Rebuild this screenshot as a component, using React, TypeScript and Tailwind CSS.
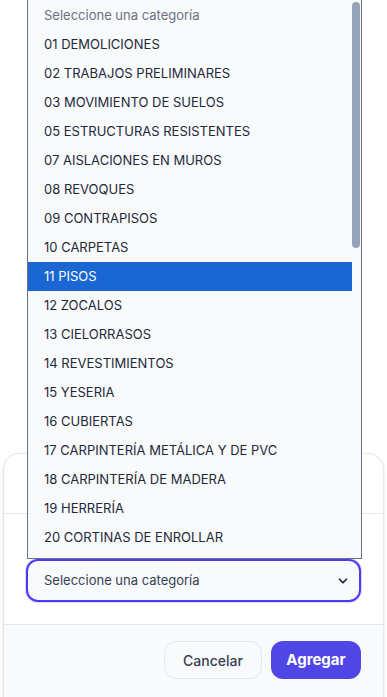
import { ChevronDown } from 'lucide-react';

const options = [
  '01 DEMOLICIONES',
  '02 TRABAJOS PRELIMINARES',
  '03 MOVIMIENTO DE SUELOS',
  '05 ESTRUCTURAS RESISTENTES',
  '07 AISLACIONES EN MUROS',
  '08 REVOQUES',
  '09 CONTRAPISOS',
  '10 CARPETAS',
  '11 PISOS',
  '12 ZOCALOS',
  '13 CIELORRASOS',
  '14 REVESTIMIENTOS',
  '15 YESERIA',
  '16 CUBIERTAS',
  '17 CARPINTERÍA METÁLICA Y DE PVC',
  '18 CARPINTERÍA DE MADERA',
  '19 HERRERÍA',
  '20 CORTINAS DE ENROLLAR',
  '21 PINTURAS',
];

export default function App() {
  return (
    <div
      className="relative h-[697px] w-full overflow-hidden bg-white text-[13px]"
      style={{ fontFamily: 'Inter, "Open Sans", sans-serif' }}
    >
      {/* Modal */}
      <div className="pt-[453px] px-[3px]">
        <div className="rounded-t-2xl border border-gray-200 bg-white shadow-sm">
          <div className="h-[60px] border-b border-gray-200" />
          <div className="px-[22px] pt-[45px] pb-[22px]">
            <div className="flex h-[43px] items-center justify-between rounded-xl border-2 border-indigo-600 bg-slate-50 pl-[16px] pr-[9px] text-gray-700 shadow-[0_0_0_1px_rgba(99,102,241,0.25)]">
              <span>Seleccione una categoría</span>
              <ChevronDown size={14} strokeWidth={3} className="text-gray-800" />
            </div>
          </div>
          <div className="flex h-[80px] justify-end gap-[9px] border-t border-gray-200 bg-gray-50 px-[22px] pt-[16px]">
            <button className="h-[38px] w-[98px] rounded-xl border border-gray-200 bg-slate-50 text-[14px] font-medium text-gray-700">
              Cancelar
            </button>
            <button className="h-[38px] w-[90px] rounded-xl bg-[#4f46e5] text-[15px] font-bold text-white">
              Agregar
            </button>
          </div>
        </div>
      </div>

      {/* Native select popup */}
      <div className="absolute left-[27px] top-0 h-[559px] w-[335px] overflow-hidden border border-t-0 border-gray-500 bg-[#f8fafc] pt-[1px]">
        <div className="flex h-[29px] items-center pl-[16px] text-gray-500">Seleccione una categoría</div>
        {options.map((o) => (
          <div
            key={o}
            className={
              o === '11 PISOS'
                ? 'mr-[9px] flex h-[29px] items-center bg-[#1a66d2] pl-[16px] text-white'
                : 'flex h-[29px] items-center pl-[16px] text-gray-800'
            }
          >
            {o}
          </div>
        ))}
        <div className="absolute right-[1px] top-[2px] h-[246px] w-[8px] rounded-full bg-[#94a3b8]" />
      </div>
    </div>
  );
}
